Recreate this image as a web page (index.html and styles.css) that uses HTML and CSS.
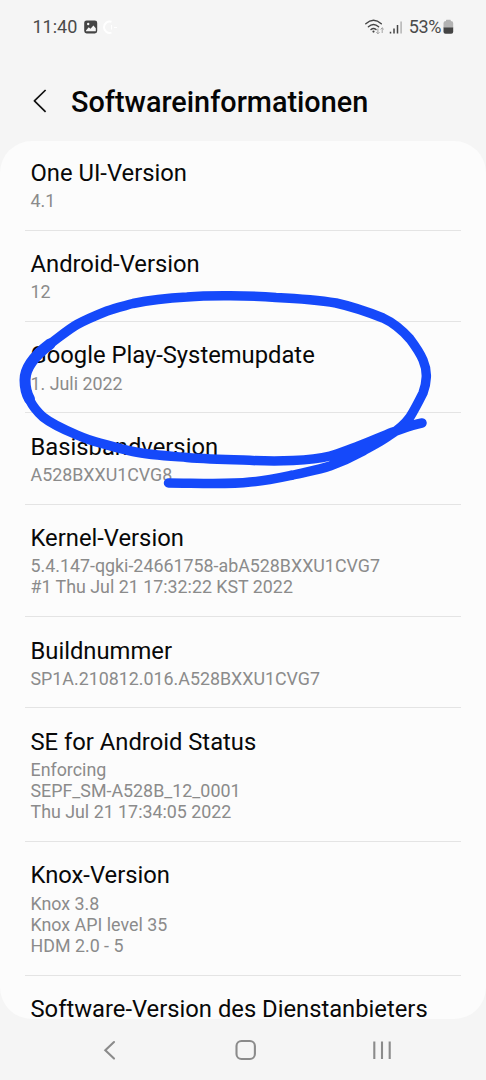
FILE: index.html
```html
<!DOCTYPE html>
<html lang="de">
<head>
<meta charset="utf-8">
<title>Softwareinformationen</title>
<link rel="stylesheet" href="styles.css">
</head>
<body>
<div class="phone">
  <div class="status">
    <span class="clock">11:40</span>
    <svg class="notes" width="35" height="16" viewBox="0 0 35 16">
      <rect x="0.2" y="1.4" width="13" height="13" rx="2.4" fill="#444"/>
      <circle cx="4.2" cy="5" r="1.2" fill="#f5f5f5"/>
      <path d="M2 11.5 4.7 8.3 6.5 9.8 9.4 6.6 11.8 9.3V12.2H2Z" fill="#f5f5f5"/>
      <path d="M27.500 2.800A5.700 5.700 0 1 0 27.500 13.600" fill="none" stroke="#fff" stroke-width="2"/>
      <path d="M27.500 6V10.500M30 8.500H33" stroke="#fff"/>
    </svg>
    <span class="spacer"></span>
    <svg class="signals" width="37" height="18" viewBox="0 0 37 18">
      <path d="M.8 5.800Q8.500-1.200 16.300 5.800M3.400 8.800Q8.500 4 13.600 8.800M6 11.600Q8.500 9.300 11 11.600" fill="none" stroke="#444" stroke-width="1.400" stroke-linecap="round"/>
      <circle cx="8.500" cy="13.600" r="1.100" fill="#444"/>
      <path d="M12.900 10.500V15.800M11.300 14.200 12.900 15.800 14.500 14.200M17.200 15V9.800M15.600 11.400 17.200 9.800 18.800 11.400" fill="none" stroke="#a2a2a2"/>
      <path d="M25.500 13.800V15.500M29 10.500V15.500M32.500 7V15.500" stroke="#444" stroke-width="1.500"/>
      <path d="M36.100 3.500V15.500" stroke="#b3b3b3" stroke-width="1.500"/>
    </svg>
    <span class="percent">53%</span>
    <svg class="battery" width="11" height="16" viewBox="0 0 11 16">
      <path d="M3 2V1.300Q3 .8 3.500.8H7.300Q7.800.8 7.800 1.300V2Q10.200 2.200 10.200 4V9H.5V4Q.5 2.200 3 2Z" fill="#b3b3b3"/>
      <path d="M.5 8.500H10.200V12.800Q10.200 14.800 8.200 14.800H2.500Q.5 14.800.5 12.800Z" fill="#444"/>
    </svg>
  </div>

  <header class="header">
    <svg class="back" width="16" height="26" viewBox="0 0 16 26"><path d="M13.600 2 2.400 12.900 13.600 23.800" fill="none" stroke="#111" stroke-width="1.700" stroke-linejoin="round"/></svg>
    <h1 class="heading">Softwareinformationen</h1>
  </header>

  <main class="card">
    <section class="row"><h2 class="title">One UI-Version</h2><p class="detail">4.1</p></section>
    <section class="row"><h2 class="title">Android-Version</h2><p class="detail">12</p></section>
    <section class="row"><h2 class="title">Google Play-Systemupdate</h2><p class="detail">1. Juli 2022</p></section>
    <section class="row"><h2 class="title">Basisbandversion</h2><p class="detail">A528BXXU1CVG8</p></section>
    <section class="row"><h2 class="title">Kernel-Version</h2><p class="detail">5.4.147-qgki-24661758-abA528BXXU1CVG7<br>#1 Thu Jul 21 17:32:22 KST 2022</p></section>
    <section class="row"><h2 class="title">Buildnummer</h2><p class="detail">SP1A.210812.016.A528BXXU1CVG7</p></section>
    <section class="row"><h2 class="title">SE for Android Status</h2><p class="detail">Enforcing<br>SEPF_SM-A528B_12_0001<br>Thu Jul 21 17:34:05 2022</p></section>
    <section class="row"><h2 class="title">Knox-Version</h2><p class="detail">Knox 3.8<br>Knox API level 35<br>HDM 2.0 - 5</p></section>
    <section class="row row-last"><h2 class="title">Software-Version des Dienstanbieters</h2></section>
  </main>

  <nav class="navbar">
    <svg width="486" height="61" viewBox="0 0 486 61" fill="none" stroke="#8b8b8b" stroke-width="2.100" stroke-linecap="round">
      <path d="M114 23 105.300 31.300 114 39.600"/>
      <rect x="236.500" y="22" width="18.400" height="18" rx="5"/>
      <path d="M374.300 22.500V40M382 22.500V40M389.700 22.500V40" stroke-linecap="butt"/>
    </svg>
  </nav>

  <svg class="marker" width="486" height="1080" viewBox="0 0 486 1080">
    <path d="M422 423C411 425 402 429 393 432C378 438 367 443 356 447C345 451 338 454 330 456C318 459 305 460 293 460.500C275 461.500 260 461 243 460C223 459.500 205 459 187 457.500C168 456 150 455 133 451.500C121 449 111 446 100 443C92 441 84 438 77 435C65 430 53 425 43 417C33 408 25 395 25 380C25 366 38 353 50 344C62 335 69 329 77 324.500C87 319 97 315 107 311C115 308 124 306 133 303.500C150 300 169 298 187 297C210 295 250 295.500 276 297.500C297 298.500 318 300 336 303C354 307 368 312 383 318C394 323 402 330 410 339C416 347 420 353 423 360C426 367 426.500 372 426.300 377C426 384 425 388 423 393C419 401 415 409 410 417C405 424 398 430 390 435C382 441 372 446 363 451C352 457 341 462 330 466C318 470 305 472 293 475C279 478 266 481 250 482C238 483.500 225 483.500 213 483.500C198 483.500 183 483 168.500 483"/>
    <path class="marker-wide" d="M29.500 399C26 393 25 386 25 380C25 366 38 353 50 344"/>
  </svg>
</div>
</body>
</html>
```
FILE: styles.css
```css
body {
  margin: 0;
  font-family: Roboto, "Noto Sans", sans-serif;
  background: #f5f5f5;
}

.phone {
  position: relative;
  display: flex;
  flex-direction: column;
  width: 486px;
  height: 1080px;
}

.status {
  display: flex;
  align-items: center;
  box-sizing: border-box;
  height: 54px;
  padding: 0 32px 0 32.500px;
  color: #4a4a4a;
  font-size: 18px;
  line-height: 22px;
}

.clock { width: 51.500px; }
.spacer { flex: 1; }
.percent { margin: 0 2px 0 6.500px; letter-spacing: -0.4px; }

.header {
  display: flex;
  align-items: center;
  gap: 23px;
  box-sizing: border-box;
  height: 87px;
  padding: 8px 32px 0 32px;
}

.back { margin-bottom: 2px; }

.heading {
  margin: 0;
  font-size: 28.800px;
  font-weight: 500;
  line-height: 36px;
  color: #050505;
}

.card {
  flex: none;
  box-sizing: border-box;
  height: 878px;
  padding: 0 25px;
  background: #fcfcfc;
  border-radius: 32px;
}

.row {
  padding: 19.500px 5.500px 18.400px;
  border-bottom: 1px solid #e4e4e4;
}

.row:first-child { padding-top: 17.900px; }

.title {
  margin: 0;
  font-size: 23.780px;
  font-weight: 400;
  line-height: 28px;
  color: #080808;
  white-space: nowrap;
}

.detail {
  margin: 3.200px 0 0;
  font-size: 17.840px;
  line-height: 21.200px;
  color: #8b8b8b;
  white-space: nowrap;
}

.row-last {
  padding: 23.500px 5.500px 0;
  border-bottom: 0;
}

.row-last .title { line-height: 20px; }

.navbar { height: 61px; }

.marker {
  position: absolute;
  top: 0;
  left: 0;
  fill: none;
  stroke: #1549fa;
  stroke-width: 9.500px;
  stroke-linecap: round;
  stroke-linejoin: round;
}

.marker-wide { stroke-width: 11px; }
```
